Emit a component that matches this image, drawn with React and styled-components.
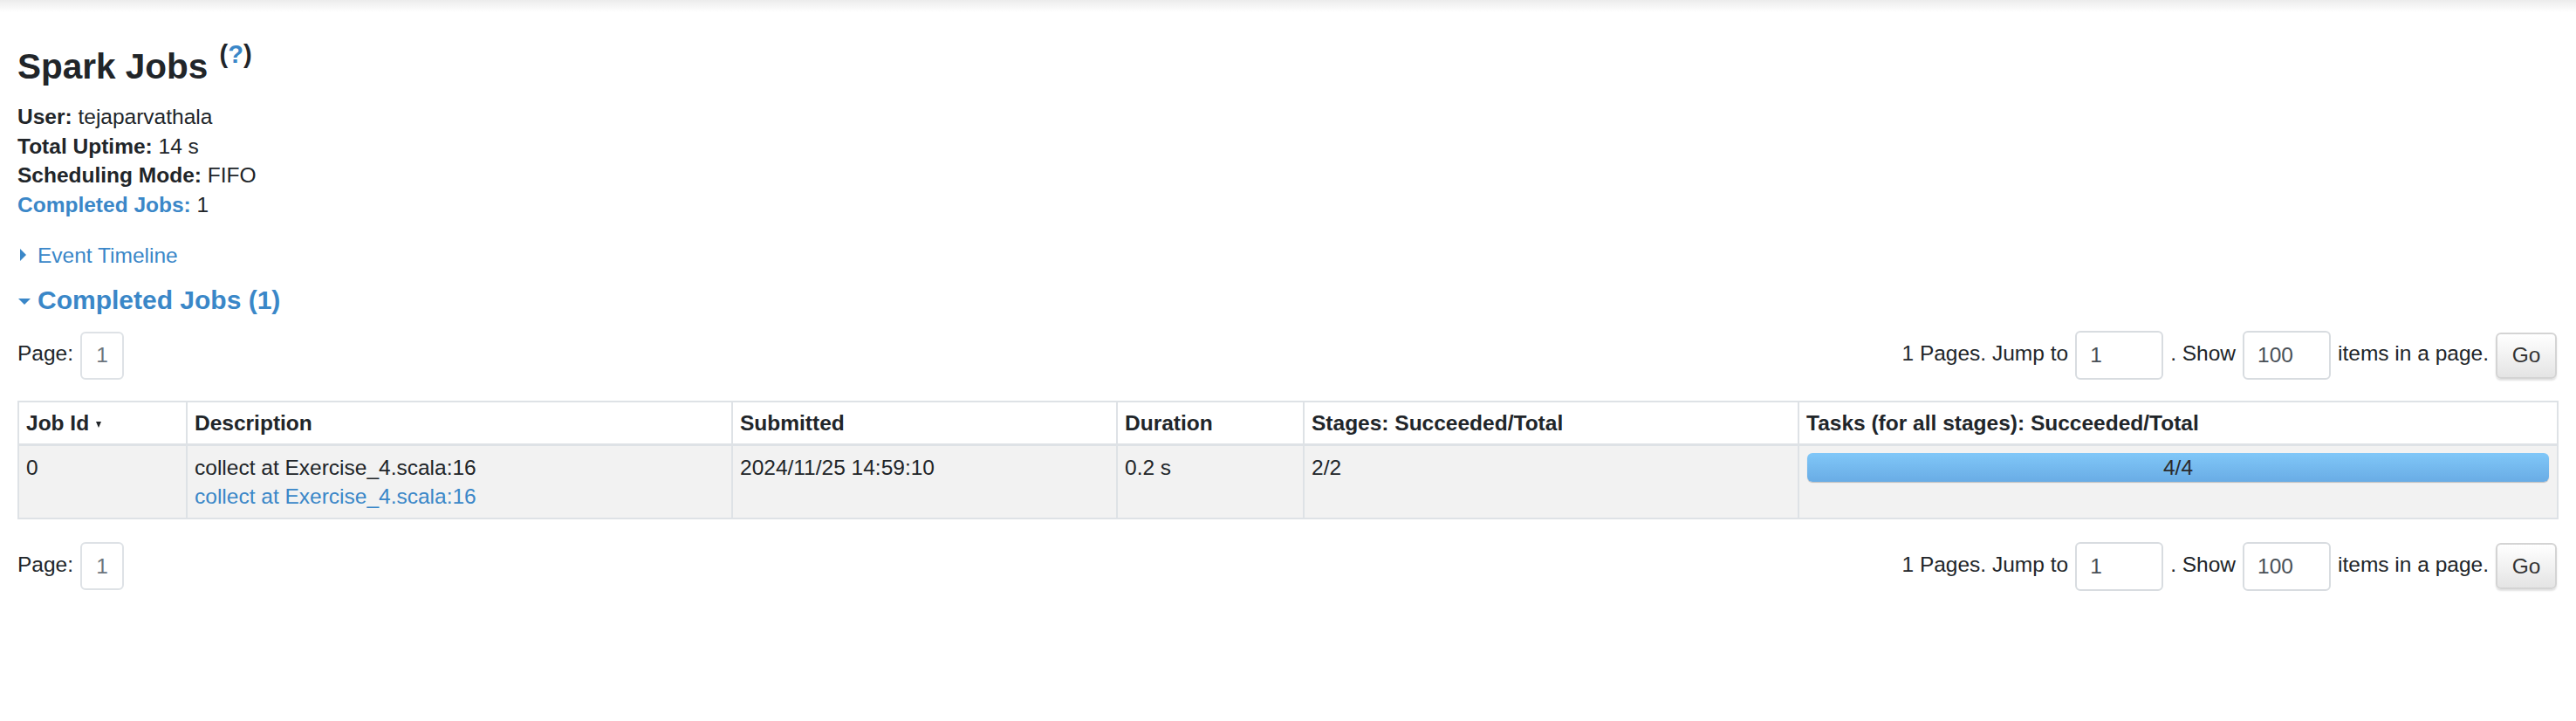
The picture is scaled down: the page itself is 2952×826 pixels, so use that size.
import React from "react";
import styled, { createGlobalStyle } from "styled-components";

const GlobalStyle = createGlobalStyle`
  html, body { margin: 0; padding: 0; background: #ffffff; }
  body {
    font-family: "Liberation Sans", Arial, Helvetica, sans-serif;
    font-size: 24.5px;
    line-height: 33.5px;
    color: #212529;
  }
  * { box-sizing: border-box; }
`;

const BLUE = "#3a87c8";

const TopShade = styled.div`
  height: 14px;
  background: linear-gradient(to bottom, #ececec, #ffffff);
`;

const Page = styled.main`
  padding: 0 22px 40px 20px;
`;

const Title = styled.h3`
  margin: 38px 0 0;
  font-size: 40.5px;
  line-height: 48px;
  font-weight: 700;
  color: #212529;
`;

const HelpSup = styled.sup`
  font-size: 29px;
  line-height: 0;
  vertical-align: 18px;
  font-weight: 700;
  color: #212529;
  margin-left: 2px;
`;

const HelpLink = styled.a`
  color: ${BLUE};
  text-decoration: none;
`;

const InfoList = styled.ul`
  list-style: none;
  margin: 17px 0 0;
  padding: 0;
`;

const InfoItem = styled.li`
  line-height: 33.5px;
`;

const Label = styled.strong`
  font-weight: 700;
  color: ${(p) => (p.$link ? BLUE : "#212529")};
`;

const Toggle = styled.div`
  display: flex;
  align-items: center;
  gap: ${(p) => (p.$open ? "8px" : "13px")};
  margin-top: ${(p) => p.$mt};
  color: ${BLUE};
  font-size: ${(p) => (p.$big ? "30px" : "24.5px")};
  line-height: ${(p) => (p.$big ? "36px" : "33.5px")};
  font-weight: ${(p) => (p.$big ? 700 : 400)};
  padding-left: ${(p) => (p.$open ? "1px" : "3px")};
`;

const Arrow = styled.span`
  display: inline-block;
  width: 0;
  height: 0;
  ${(p) =>
    p.$open
      ? `border-left: 7px solid transparent;
         border-right: 7px solid transparent;
         border-top: 7px solid ${BLUE};
         margin-top: 4px;`
      : `border-top: 7px solid transparent;
         border-bottom: 7px solid transparent;
         border-left: 7px solid ${BLUE};`}
`;

const PagerBar = styled.div`
  display: flex;
  align-items: center;
  justify-content: space-between;
  margin-top: ${(p) => p.$mt};
  height: 56px;
`;

const PagerGroup = styled.div`
  display: flex;
  align-items: center;
  gap: ${(p) => p.$gap || "8px"};
`;

const PagerText = styled.span`
  position: relative;
  top: -2px;
  white-space: nowrap;
`;

const PageBox = styled.span`
  display: inline-flex;
  align-items: center;
  justify-content: center;
  width: 50px;
  height: 55px;
  border: 2px solid #dee2e6;
  border-radius: 6px;
  color: #6c757d;
`;

const NumInput = styled.input`
  width: 101px;
  height: 56px;
  padding: 0 0 0 15px;
  border: 2px solid #d8dce0;
  border-radius: 6px;
  font-family: inherit;
  font-size: 24.5px;
  color: #495057;
  background: #fff;
  outline: none;
`;

const GoButton = styled.button`
  width: 70px;
  height: 53px;
  border: 2px solid #d4d4d4;
  border-radius: 6px;
  background: linear-gradient(to bottom, #ffffff, #e4e4e4);
  box-shadow: 0 2px 2px rgba(0, 0, 0, 0.12);
  font-family: inherit;
  font-size: 24.5px;
  color: #333;
  padding: 0;
`;

const Table = styled.table`
  margin-top: 24px;
  width: 2910px;
  table-layout: fixed;
  border-collapse: collapse;
  border: 2px solid #dee2e6;
`;

const Th = styled.th`
  width: ${(p) => p.$w}px;
  text-align: left;
  font-weight: 700;
  padding: 6.5px 8px;
  line-height: 33.5px;
  border-left: 2px solid #dee2e6;
  border-bottom: 3px solid #dee2e6;
  background: #fff;
  color: #212529;
  white-space: nowrap;
`;

const SortMark = styled.span`
  display: inline-block;
  width: 0;
  height: 0;
  margin-left: 8px;
  vertical-align: middle;
  border-left: 3.5px solid transparent;
  border-right: 3.5px solid transparent;
  border-top: 7px solid #212529;
`;

const Tr = styled.tr`
  background: #f2f2f2;
`;

const Td = styled.td`
  vertical-align: top;
  padding: 8px 9px 7px 8px;
  line-height: 33.5px;
  border-left: 2px solid #dee2e6;
  color: #212529;
`;

const DescLink = styled.a`
  display: block;
  color: ${BLUE};
  text-decoration: none;
`;

const Progress = styled.div`
  height: 33px;
  margin-left: 1px;
  border-radius: 6px;
  overflow: hidden;
  background: #f2f2f2;
  box-shadow: 0 1px 1px rgba(0, 0, 0, 0.22);
`;

const ProgressFill = styled.div`
  height: 100%;
  background: linear-gradient(to bottom, #80c7f8, #69ace5);
  display: flex;
  align-items: center;
  justify-content: center;
  line-height: 33px;
  color: #2b2b2b;
`;

const columns = [
  { key: "id", label: "Job Id", w: 193, sort: true },
  { key: "desc", label: "Description", w: 625 },
  { key: "sub", label: "Submitted", w: 441 },
  { key: "dur", label: "Duration", w: 214 },
  { key: "stages", label: "Stages: Succeeded/Total", w: 567 },
  { key: "tasks", label: "Tasks (for all stages): Succeeded/Total", w: 870 },
];

function Pager({ mt }) {
  return (
    <PagerBar $mt={mt}>
      <PagerGroup $gap="8px">
        <PagerText>Page:</PagerText>
        <PageBox>1</PageBox>
      </PagerGroup>
      <PagerGroup $gap="8px">
        <PagerText>1 Pages. Jump to</PagerText>
        <NumInput defaultValue="1" />
        <PagerText>. Show</PagerText>
        <NumInput defaultValue="100" />
        <PagerText>items in a page.</PagerText>
        <GoButton>Go</GoButton>
      </PagerGroup>
    </PagerBar>
  );
}

export default function App() {
  const done = 4;
  const total = 4;
  return (
    <>
      <GlobalStyle />
      <TopShade />
      <Page>
        <Title>
          Spark Jobs{" "}
          <HelpSup>
            (<HelpLink href="#">?</HelpLink>)
          </HelpSup>
        </Title>
        <InfoList>
          <InfoItem>
            <Label>User:</Label> tejaparvathala
          </InfoItem>
          <InfoItem>
            <Label>Total Uptime:</Label> 14 s
          </InfoItem>
          <InfoItem>
            <Label>Scheduling Mode:</Label> FIFO
          </InfoItem>
          <InfoItem>
            <Label $link>Completed Jobs:</Label> 1
          </InfoItem>
        </InfoList>
        <Toggle $mt="24.5px">
          <Arrow />
          <span>Event Timeline</span>
        </Toggle>
        <Toggle $mt="16.5px" $big $open>
          <Arrow $open />
          <span>Completed Jobs (1)</span>
        </Toggle>
        <Pager mt="17.5px" />
        <Table>
          <thead>
            <tr>
              {columns.map((c) => (
                <Th key={c.key} $w={c.w}>
                  {c.label}
                  {c.sort && <SortMark />}
                </Th>
              ))}
            </tr>
          </thead>
          <tbody>
            <Tr>
              <Td>0</Td>
              <Td>
                collect at Exercise_4.scala:16
                <DescLink href="#">collect at Exercise_4.scala:16</DescLink>
              </Td>
              <Td>2024/11/25 14:59:10</Td>
              <Td>0.2 s</Td>
              <Td>2/2</Td>
              <Td>
                <Progress>
                  <ProgressFill style={{ width: `${(done / total) * 100}%` }}>
                    {done}/{total}
                  </ProgressFill>
                </Progress>
              </Td>
            </Tr>
          </tbody>
        </Table>
        <Pager mt="26px" />
      </Page>
    </>
  );
}
